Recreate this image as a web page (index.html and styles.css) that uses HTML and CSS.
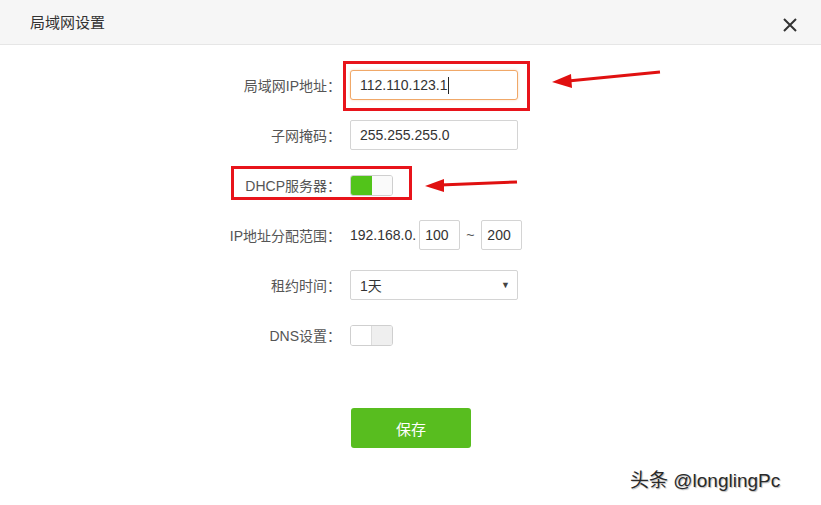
FILE: index.html
```html
<!DOCTYPE html>
<html lang="zh-CN">
<head>
<meta charset="utf-8">
<title>局域网设置</title>
<link rel="stylesheet" href="styles.css">
</head>
<body>
<div class="dialog">
  <div class="header">
    <span class="title">局域网设置</span>
    <span class="close">
      <svg width="16" height="16" viewBox="0 0 16 16"><path d="M2 2 L14 14 M14 2 L2 14" stroke="#333" stroke-width="2" fill="none"/></svg>
    </span>
  </div>
  <div class="form">
    <div class="row">
      <label class="lbl">局域网IP地址：</label>
      <div class="field"><div class="input focus">112.110.123.1<span class="caret"></span></div></div>
    </div>
    <div class="row">
      <label class="lbl">子网掩码：</label>
      <div class="field"><div class="input">255.255.255.0</div></div>
    </div>
    <div class="row">
      <label class="lbl">DHCP服务器：</label>
      <div class="field"><div class="toggle on"><span class="half a"></span><span class="half b"></span></div></div>
    </div>
    <div class="row">
      <label class="lbl">IP地址分配范围：</label>
      <div class="field range"><span class="prefix">192.168.0.</span><div class="input small">100</div><span class="tilde">~</span><div class="input small">200</div></div>
    </div>
    <div class="row">
      <label class="lbl">租约时间：</label>
      <div class="field"><div class="input select">1天<span class="arrow">▼</span></div></div>
    </div>
    <div class="row">
      <label class="lbl">DNS设置：</label>
      <div class="field"><div class="toggle off"><span class="half a"></span><span class="half b"></span></div></div>
    </div>
    <div class="actions">
      <button class="save">保存</button>
    </div>
  </div>

  <div class="mark mark-ip"></div>
  <div class="mark mark-dhcp"></div>
  <svg class="arrows" width="821" height="505" viewBox="0 0 821 505">
    <line x1="660" y1="72" x2="568" y2="81" stroke="#e01010" stroke-width="3"/>
    <polygon points="552,82 571,74 572,88" fill="#e01010"/>
    <line x1="517" y1="182" x2="440" y2="185" stroke="#e01010" stroke-width="3"/>
    <polygon points="425,186 444,179 444,192" fill="#e01010"/>
  </svg>
  <div class="watermark">头条 @longlingPc</div>
</div>
</body>
</html>
```
FILE: styles.css
```css
html, body {
  margin: 0;
  padding: 0;
  background: #fff;
}
body {
  font-family: "Liberation Sans", "Noto Sans CJK SC", sans-serif;
  color: #555;
  width: 821px;
  height: 505px;
  overflow: hidden;
}
.dialog {
  position: relative;
  width: 821px;
  height: 505px;
}
.header {
  height: 44px;
  background: #f6f6f6;
  border-bottom: 1px solid #e6e6e6;
  display: flex;
  align-items: center;
  justify-content: space-between;
  padding: 0 23px 0 30px;
}
.title {
  font-size: 15px;
  color: #333;
  margin-top: -2px;
}
.close {
  display: flex;
  margin-top: 6px;
}
.form {
  padding-top: 25px;
  display: flex;
  flex-direction: column;
  gap: 20px;
}
.row {
  display: grid;
  grid-template-columns: 337px auto;
  column-gap: 13px;
  align-items: center;
  height: 30px;
}
.lbl {
  text-align: right;
  font-size: 14px;
  color: #555;
  white-space: nowrap;
  margin-right: -4px;
}
.field {
  display: flex;
  align-items: center;
}
.input {
  box-sizing: border-box;
  width: 168px;
  height: 30px;
  border: 1px solid #d4d4d4;
  border-radius: 2px;
  padding: 0 9px;
  font-size: 14px;
  color: #333;
  display: flex;
  align-items: center;
  background: #fff;
}
.input.focus {
  border-color: #f0a868;
  box-shadow: 0 0 3px rgba(240, 150, 80, 0.35);
  border-radius: 3px;
}
.caret {
  display: inline-block;
  width: 1px;
  height: 17px;
  background: #222;
  margin-left: 1px;
}
.input.small {
  width: 41px;
  padding: 0 5px;
}
.prefix {
  font-size: 14px;
  color: #333;
  margin-right: 3px;
}
.tilde {
  font-size: 14px;
  color: #555;
  margin: 0 7px 0 6px;
}
.input.select {
  justify-content: space-between;
}
.arrow {
  font-size: 9px;
  color: #444;
  margin-right: -2px;
}
.toggle {
  box-sizing: border-box;
  width: 43px;
  height: 21px;
  border: 1px solid #cfcfcf;
  border-radius: 3px;
  display: flex;
  overflow: hidden;
  background: #fff;
}
.half {
  flex: 1;
}
.toggle.on .a {
  background: #52c41a;
}
.toggle.on .b {
  background: #fafafa;
}
.toggle.off .a {
  background: #fff;
  border-right: 1px solid #dcdcdc;
}
.toggle.off .b {
  background: #efefef;
}
.actions {
  margin-top: 38px;
  padding-left: 351px;
}
.save {
  width: 120px;
  height: 40px;
  border: none;
  border-radius: 3px;
  background: #58bd1f;
  color: #fff;
  font-family: "Noto Sans CJK SC", sans-serif;
  font-size: 15px;
  padding: 0;
}
.mark {
  position: absolute;
  border: 3px solid #e8141b;
  box-sizing: border-box;
}
.mark-ip {
  left: 343px;
  top: 61px;
  width: 187px;
  height: 50px;
}
.mark-dhcp {
  left: 231px;
  top: 166px;
  width: 181px;
  height: 34px;
}
.arrows {
  position: absolute;
  left: 0;
  top: 0;
  pointer-events: none;
}
.watermark {
  position: absolute;
  left: 630px;
  top: 465px;
  font-size: 19px;
  color: #2a2a2a;
  font-family: "Liberation Sans", "Noto Sans CJK SC", sans-serif;
  text-shadow: 1px 1px 1px #bbb;
  white-space: nowrap;
}
```
